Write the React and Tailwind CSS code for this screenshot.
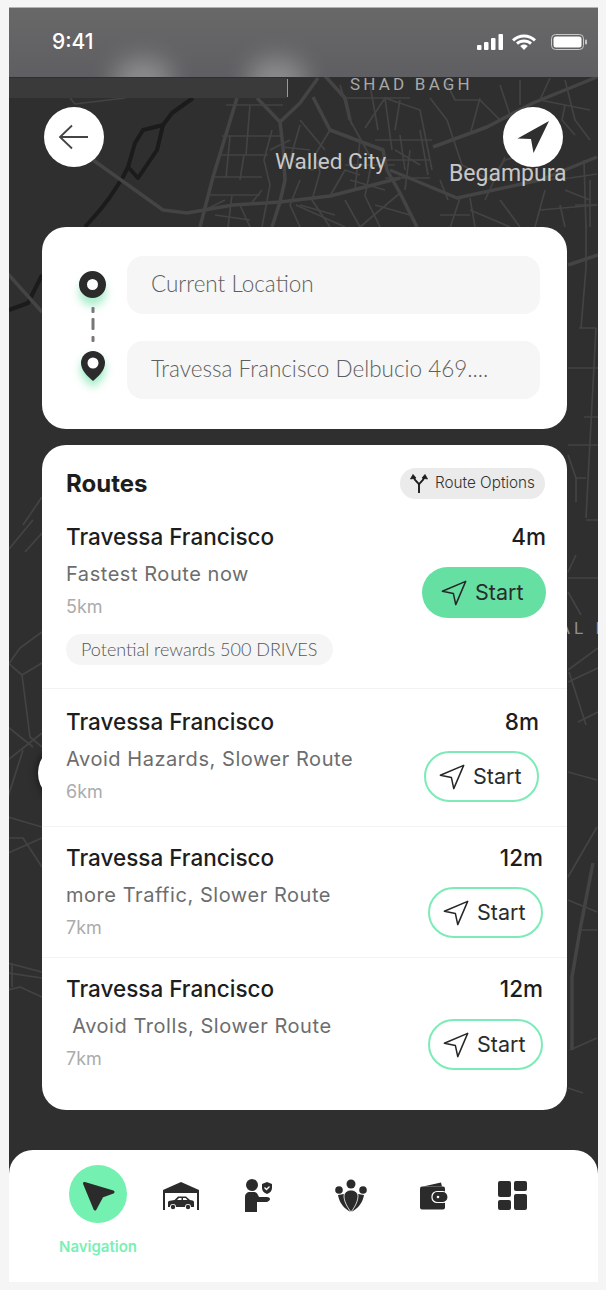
import React from 'react';

const thickRoads = [
  'M237 98 L213 177 L200 227',
  'M257 98 L280 122 L283 147 L285 180 L280 202 L272 227',
  'M280 122 L300 103 L318 78',
  'M313 97 L330 130 L383 150 L387 170 L400 193 L417 227',
  'M390 170 L457 198 L540 180 L597 157',
  'M93 160 L163 210 L187 213 L233 205 L280 202 L330 196 L400 178',
  'M433 147 L487 127 L533 103 L597 77',
  'M325 76 L345 98 L350 120',
  'M8 274 L42 312',
  'M593 863 L580 930 L572 977 L572 1050',
  'M568 265 L598 255',
];

const thinRoads = [
  'M70 98 L75 104 L125 98',
  'M226 105 H283 M222 136 H280 M218 155 H268 M213 177 H262 M207 195 H260',
  'M250 105 L246 155 M272 130 L264 160 L270 185 L262 227',
  'M230 136 L226 178 M244 155 L240 180 M232 195 L228 227',
  'M290 160 L312 170 L330 160 M283 147 L310 150',
  'M300 180 L290 205 L300 227 M320 172 L312 200 L330 227',
  'M240 205 L250 227 M296 205 L345 227 M330 196 L345 170 L360 175',
  'M350 120 L372 160 L365 196 L380 227',
  'M365 128 L385 98 L392 150 M385 98 L420 110 L432 170',
  'M345 98 H410 M375 140 H432 M380 160 H430 M385 178 H430',
  'M400 135 L405 170 M420 130 L428 175 M440 180 L448 200',
  'M430 98 L447 120 L462 165 L490 180 M490 180 L505 160 L540 150',
  'M480 98 L470 135 M520 80 L520 105 M550 78 L540 100 L590 110',
  'M565 105 L562 120 L575 135 M450 228 L460 198 M400 193 L360 227',
  'M505 157 L485 200 M533 160 L530 180 M545 190 L535 227',
  'M540 180 L570 178 L597 174 M584 160 L586 227 M565 190 L590 200',
  'M470 210 L510 227 M540 210 L597 205 M470 198 L475 227',
  'M300 120 L325 150 M300 125 L290 160 M340 85 L352 125 M370 85 L378 130 M400 100 L395 130',
  'M395 150 L420 165 M410 150 L405 190 M345 165 H395 M350 180 L385 190 M360 140 L355 190',
  'M330 130 L315 155 L320 172 M300 205 L335 215 M345 200 L360 227 M375 205 L410 215',
  'M250 205 L262 190 M215 215 L250 220 M205 210 L225 200 M270 150 L290 140',
  'M445 80 L455 100 L480 100 L500 120 M500 85 L510 115 M565 80 L575 120 L590 140',
  'M440 215 H470 M500 200 L520 227 M560 205 L565 227 M590 180 V227 M575 205 H597',
  'M8 550 L33 520 M25 552 L42 533 M23 525 L42 497',
  'M8 665 L20 648 L42 632 M8 663 L22 675 L30 737 L42 747',
  'M22 675 L42 663 M8 727 L33 747 M8 760 L42 733 M23 750 L8 797',
  'M8 817 L42 827 M8 838 H23 L42 867 M8 853 L42 838',
  'M8 963 L42 972 M8 973 L42 978 M12 963 V987 M8 990 L20 987 L42 997',
  'M586 225 V268 L581 328 M579 328 H596 M596 328 L586 518 M568 368 H598',
  'M584 417 H598 M586 520 H598 M568 445 H598 M568 455 L576 478 H586 M576 478 V502',
  'M568 578 H598 M576 555 L568 572 M568 592 L581 615',
  'M568 670 L598 648 M568 682 L598 668 M569 672 L586 725 M578 722 L598 712',
  'M568 772 L597 780 M568 877 L597 827 M568 900 L597 912 M570 1050 L597 1038',
  'M580 930 H597 M568 1088 L583 1093',
];

// river and rail lines
const darkLines = [
  'M193 98 L172 113 L163 125 L143 130 L135 143 L128 167 L123 177 L110 197 L100 210 L85 227',
  'M163 125 L157 150 L138 178 L128 167',
  'M9 310 L28 303 L42 275',
];

function CityMap() {
  return (
    <svg className="absolute inset-0 w-full h-full" viewBox="9 8 589 1274" fill="none">
      <g stroke="#1b1b1b" strokeWidth="4" strokeLinejoin="round">
        {darkLines.map((d) => <path key={d} d={d} />)}
      </g>
      <g stroke="#444444" strokeWidth="3.5" strokeLinejoin="round">
        {thickRoads.map((d) => <path key={d} d={d} />)}
      </g>
      <g stroke="#434343" strokeWidth="1.7" strokeLinejoin="round">
        {thinRoads.map((d) => <path key={d} d={d} />)}
      </g>
      <rect x="9" y="78" width="278" height="20" fill="#3a3a3a" />
      <rect x="287" y="79" width="1" height="18" fill="#9a9a9a" />
    </svg>
  );
}

function StatusBar() {
  return (
    <div className="relative z-10 h-[69px] bg-[linear-gradient(180deg,#686868,#5f5f63)] overflow-hidden">
      <div className="absolute left-[104px] top-[50px] w-[60px] h-[50px] rounded-full bg-[#a0a0a0] blur-[12px] opacity-70"></div>
      <div className="absolute left-[238px] top-[50px] w-[60px] h-[50px] rounded-full bg-[#a0a0a0] blur-[12px] opacity-70"></div>
      <div className="relative flex items-center justify-between h-full pl-[43px] pr-[10px] pb-[1px]">
        <span className="text-[21px] font-medium text-white font-['Inter',sans-serif]">9:41</span>
        <svg width="112" height="16" viewBox="0 0 112 16" fill="white">
          <rect x="1" y="11" width="4.5" height="5" rx="1" />
          <rect x="8" y="8" width="4.5" height="8" rx="1" />
          <rect x="15" y="4" width="4.5" height="12" rx="1" />
          <rect x="22.5" y="0" width="4.5" height="16" rx="1" />
          <path d="M48 3.5c4 0 7 1.4 10 4l2-2.2C56.500 2 52.500.5 48 .5S39.500 2 36 5.300l2 2.200c3-2.600 6-4 10-4Z" />
          <path d="M48 8.500c2.500 0 4.300.8 6 2.300l2-2.200C53.800 6.600 51 5.500 48 5.500s-5.800 1.100-8 3.100l2 2.200c1.700-1.500 3.500-2.300 6-2.300Z" />
          <path d="M48 10.500c-1.500 0-2.800.6-3.800 1.500L48 16l3.800-4c-1-.9-2.300-1.500-3.800-1.500Z" />
          <rect x="75.500" y="0.500" width="32" height="15" rx="4" fill="none" stroke="#c9c9c9" />
          <rect x="77.500" y="2.500" width="28" height="11" rx="2.500" />
          <rect x="109" y="5.500" width="2" height="5" rx="1" fill="#c9c9c9" />
        </svg>
      </div>
    </div>
  );
}

function StartIcon({ size = 28 }) {
  return (
    <svg width={size} height={size} viewBox="0 0 24 24" fill="none" stroke="#262626" strokeWidth="1.300" strokeLinejoin="round">
      <polygon points="2 10.500 22 2 13.500 22 11.500 12.500 2 10.500" />
    </svg>
  );
}

function StartButton({ primary }) {
  const cls = primary
    ? 'bg-[#66dfa3] w-[124px] border-0 pl-[18px]'
    : 'bg-white w-[115px] border-2 border-[#7eeab8] pl-[12px]';
  return (
    <div className={`flex items-center gap-[7px] h-[51px] rounded-full ${cls}`}>
      <StartIcon />
      <span className="text-[21.500px] text-[#2b2b2b]">Start</span>
    </div>
  );
}

function RouteRow({ sub, km, time, pr, pt, pb, btnTop, primary, border = true, children }) {
  return (
    <div className={`flex justify-between pl-[24px] ${pr} ${pt} ${pb} ${border ? 'border-b border-[#f3f3f3]' : ''}`}>
      <div>
        <div className="text-[22.500px] leading-[30px] font-medium text-[#1d1d1d]">Travessa Francisco</div>
        <div className="mt-[7px] text-[20px] leading-[30px] tracking-[0.55px] text-[#6d6d6d] whitespace-pre">{sub}</div>
        <div className="mt-[6px] text-[18px] leading-[23px] text-[#ababab]">{km}</div>
        {children}
      </div>
      <div className="flex flex-col items-end">
        <div className="text-[22.500px] leading-[30px] font-medium text-[#1d1d1d]">{time}</div>
        <div className={btnTop}>
          <StartButton primary={primary} />
        </div>
      </div>
    </div>
  );
}

function GarageIcon() {
  return (
    <svg width="36" height="28" viewBox="0 0 36 28" fill="#2b2b2b">
      <path d="M0 8 18 0l18 8v20h-2V11H2v17H0Z" />
      <path d="M5 20.500c0-1 .8-1.700 2-1.800l4.500-.7L15 14.500h8l4 3.600 2.500.5c1 .2 1.500 1 1.500 2V25h-3a3 3 0 0 0-6 0H13a3 3 0 0 0-6 0H5Z" />
      <circle cx="10" cy="25" r="2.200" />
      <circle cx="25" cy="25" r="2.200" />
      <path d="M14 18l2-2h2.500v2ZM20 16h2.500l2 2H20Z" fill="white" />
    </svg>
  );
}

function AgentIcon() {
  return (
    <svg width="30" height="36" viewBox="243 1178 30 36" fill="#2b2b2b">
      <circle cx="252" cy="1185" r="6" />
      <path d="M245 1197c0-3 2-5 5-5h4c2 0 3 1 4 3l1 2h8c2 0 3 1 3 2s-1 2-3 3h-10v10h-12Z" />
      <path d="M267 1182l5 2v4c0 3-2 5-5 6-3-1-5-3-5-6v-4Z" />
      <path d="M264.500 1187.500l2 2 3-3" stroke="white" strokeWidth="1.300" fill="none" />
    </svg>
  );
}

function GroupIcon() {
  return (
    <svg width="32" height="34" viewBox="335 1178 32 34" fill="#2b2b2b">
      <circle cx="351" cy="1183" r="4.500" />
      <circle cx="339" cy="1189" r="3.800" />
      <circle cx="363" cy="1189" r="3.800" />
      <path d="M338 1194l6-1c2 6 4 12 7 18-7-3-12-10-13-17Z" />
      <path d="M364 1194l-6-1c-2 6-4 12-7 18 7-3 12-10 13-17Z" />
      <path d="M351 1211c-4-5-7-11-7-16 0-3 3-6 7-6s7 3 7 6c0 5-3 11-7 16Z" stroke="white" strokeWidth="0.800" />
    </svg>
  );
}

function WalletIcon() {
  return (
    <svg width="30" height="28" viewBox="418 1181.500 30 28" fill="#2b2b2b">
      <path d="M422 1186l18-4 1 4Z" />
      <rect x="419" y="1186" width="25" height="23" rx="2" />
      <rect x="431" y="1191" width="16" height="11" rx="5" stroke="white" strokeWidth="1.200" />
      <circle cx="437" cy="1196.500" r="1.300" fill="white" />
    </svg>
  );
}

function GridIcon() {
  return (
    <svg width="30" height="30" viewBox="498 1181 30 30" fill="#2b2b2b">
      <rect x="498" y="1181" width="13" height="16" rx="2" />
      <rect x="514" y="1181" width="13" height="10" rx="2" />
      <rect x="498" y="1200" width="13" height="10" rx="2" />
      <rect x="514" y="1194" width="13" height="16" rx="2" />
    </svg>
  );
}

export default function App() {
  return (
    <div className="w-[606px] h-[1290px] bg-[#f5f5f5] pt-[7px] pl-[9px] pr-[8px] font-['Inter',sans-serif]">
      <div className="relative h-[1275px] bg-[#2f2f2f] border-t border-[#b3aae0] overflow-hidden">
        <CityMap />
        {/* map labels */}
        <span className="absolute left-[341px] top-[64px] whitespace-nowrap text-[17px] tracking-[3.200px] text-[#a8a8a8] font-['Roboto',sans-serif]">SHAD BAGH</span>
        <span className="absolute left-[266px] top-[137px] whitespace-nowrap text-[22.500px] text-[#c8c8c8] font-['Roboto',sans-serif]">Walled City</span>
        <span className="absolute left-[440px] top-[149px] whitespace-nowrap text-[23px] text-[#c8c8c8] font-['Roboto',sans-serif]">Begampura</span>
        <span className="absolute left-[550px] top-[608px] whitespace-nowrap text-[17px] tracking-[4px] text-[#8f8f8f] font-['Roboto',sans-serif]">AL P</span>
        <div className="absolute left-[29px] top-[735px] w-[60px] h-[60px] rounded-full bg-white shadow-[0_0_10px_rgba(0,0,0,0.6)]"></div>

        <StatusBar />

        <div className="relative flex justify-between px-[35px] pt-[30px]">
          <div className="flex items-center justify-center w-[60px] h-[60px] rounded-full bg-white">
            <svg width="34" height="28" viewBox="0 0 34 28" fill="none" stroke="#444444" strokeWidth="1.800">
              <path d="M31 14H3M15 2.500 3 14l12 11.500" />
            </svg>
          </div>
          <div className="flex items-center justify-center w-[60px] h-[60px] rounded-full bg-white">
            <svg width="36" height="36" viewBox="0 0 36 36" fill="#2f2f2f">
              <path d="M34 2 2.500 19.500 16 20l2.500 14Z" />
            </svg>
          </div>
        </div>

        <div className="relative ml-[33px] mr-[31px] mt-[60px]">
          {/* search card */}
          <div className="flex bg-white rounded-[24px] pt-[29px] pb-[30px] pl-[36px] pr-[27px]">
            <div className="flex flex-col items-center w-[29px] pt-[15px]">
              <div className="w-[27px] h-[27px] rounded-full border-[8px] border-[#2b2b2b] bg-white shadow-[0_8px_8px_rgba(102,223,163,0.55)]"></div>
              <svg className="mt-[9px]" width="4" height="35" viewBox="0 0 4 35" fill="#777777">
                <rect x="0.500" y="0" width="3" height="6" rx="1" />
                <rect x="0.500" y="11" width="3" height="12" rx="1" />
                <rect x="0.500" y="29" width="3" height="6" rx="1" />
              </svg>
              <svg className="mt-[9px] drop-shadow-[0_6px_5px_rgba(102,223,163,0.7)]" width="24" height="30" viewBox="0 0 24 30" fill="#2b2b2b">
                <path d="M12 0a12 12 0 0 1 12 12c0 7-6 13-12 18C6 25 0 19 0 12A12 12 0 0 1 12 0Z" />
                <circle cx="12" cy="12" r="5.500" fill="white" />
              </svg>
            </div>
            <div className="flex-1 ml-[20px] flex flex-col gap-[27px] font-['Lato',sans-serif] font-light text-[22.500px] text-[#5f5f5f]">
              <div className="flex items-center h-[58px] pl-[24px] pb-[2px] rounded-[16px] bg-[#f6f6f6]">Current Location</div>
              <div className="flex items-center h-[58px] pl-[24px] pb-[3px] rounded-[16px] bg-[#f6f6f6]">Travessa Francisco Delbucio 469....</div>
            </div>
          </div>

          {/* routes card */}
          <div className="mt-[16px] bg-white rounded-[24px]">
            <div className="flex items-center justify-between pl-[24px] pr-[22px] pt-[23px]">
              <span className="text-[24px] leading-[30px] font-bold text-[#1d1d1d]">Routes</span>
              <div className="flex items-center gap-[7px] h-[31px] pl-[10px] pr-[10px] rounded-full bg-[#ebebeb]">
                <svg width="18" height="19" viewBox="0 0 18 19" fill="none" stroke="#1d1d1d" strokeWidth="1.900">
                  <path d="M9 19v-8C9 8 5 8 3.500 3M9 11c0-3 4-3 5.500-8" />
                  <path d="M0.500 5 3 0.500 6 4ZM12 4l3-3.500L17.500 5Z" fill="#1d1d1d" strokeWidth="0.800" />
                </svg>
                <span className="text-[15.300px] font-light text-[#333333]">Route Options</span>
              </div>
            </div>
            <RouteRow sub="Fastest Route now" km="5km" time="4m" primary pr="pr-[21px]" pt="pt-[23px]" pb="pb-[23px]" btnTop="mt-[15px]">
              <div className="mt-[16px] flex items-center w-[267px] h-[31px] pl-[15px] rounded-full bg-[#f5f5f5] font-['Lato',sans-serif] font-light text-[18px] text-[#555555]">
                Potential rewards 500 DRIVES
              </div>
            </RouteRow>
            <RouteRow sub="Avoid Hazards, Slower Route" km="6km" time="8m" pr="pr-[28px]" pt="pt-[18px]" pb="pb-[23px]" btnTop="mt-[14px]" />
            <RouteRow sub="more Traffic, Slower Route" km="7km" time="12m" pr="pr-[24px]" pt="pt-[16px]" pb="pb-[18px]" btnTop="mt-[14px]" />
            <RouteRow sub=" Avoid Trolls, Slower Route" km="7km" time="12m" pr="pr-[24px]" pt="pt-[16px]" pb="pb-[40px]" btnTop="mt-[15px]" border={false} />
          </div>
        </div>

        {/* bottom nav */}
        <div className="relative flex mt-[40px] h-[132px] bg-white rounded-t-[24px] pl-[50px] pt-[15px]">
          <div className="flex flex-col items-center w-[78px]">
            <div className="flex items-center justify-center w-[58px] h-[58px] rounded-full bg-[#74f0b0]">
              <svg width="36" height="36" viewBox="0 0 36 36" fill="#2b2b2b" stroke="#2b2b2b" strokeWidth="3" strokeLinejoin="round">
                <path d="M4.500 7.500 33 16 22 20 15 33Z" />
              </svg>
            </div>
            <span className="mt-[14px] text-[15px] font-semibold text-[#7af0b5] leading-[20px] whitespace-nowrap">Navigation</span>
          </div>
          <div className="flex items-center justify-center w-[40px] h-[58px] pt-[4px] ml-[24px]"><GarageIcon /></div>
          <div className="flex items-center justify-center w-[40px] h-[58px] pt-[4px] ml-[37px]"><AgentIcon /></div>
          <div className="flex items-center justify-center w-[40px] h-[58px] pt-[4px] ml-[53px]"><GroupIcon /></div>
          <div className="flex items-center justify-center w-[40px] h-[58px] pt-[4px] ml-[43px]"><WalletIcon /></div>
          <div className="flex items-center justify-center w-[40px] h-[58px] pt-[4px] ml-[39px]"><GridIcon /></div>
        </div>
      </div>
    </div>
  );
}
